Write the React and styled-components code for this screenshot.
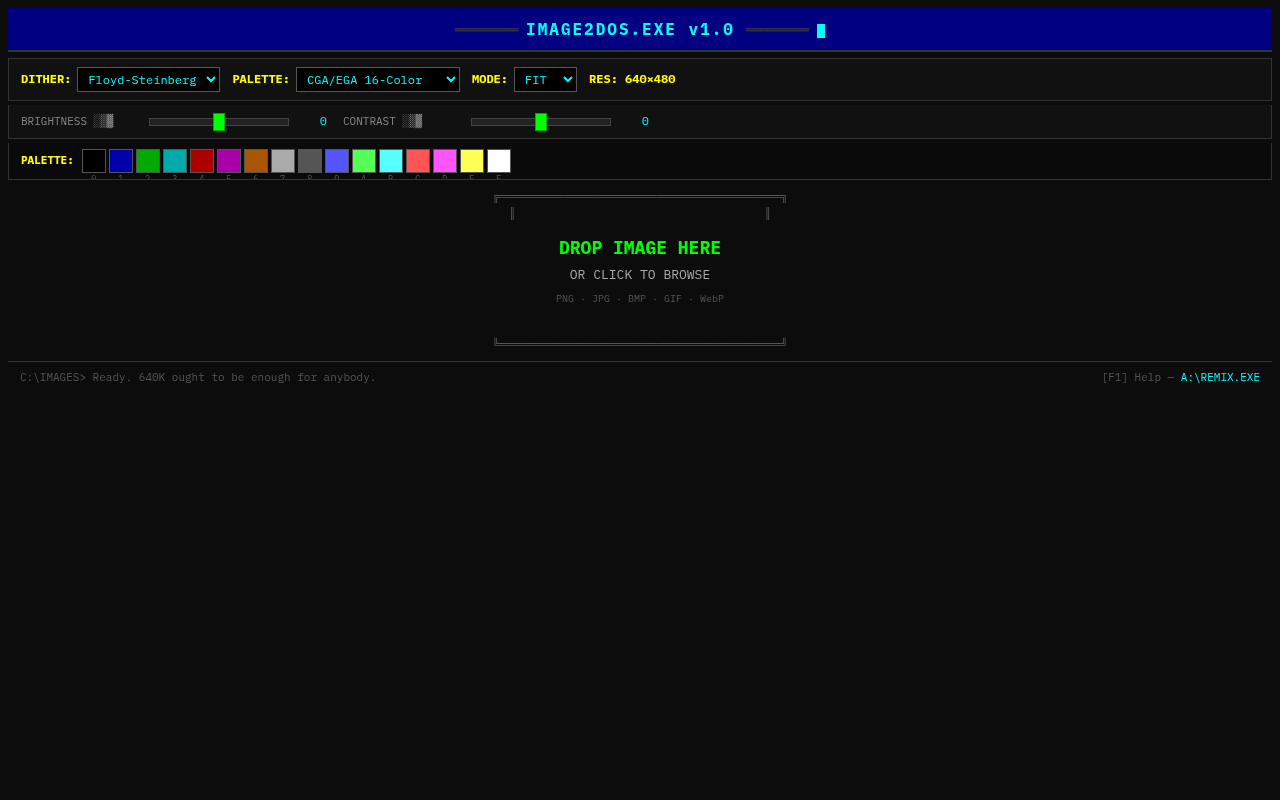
import React, { useState } from 'react';
import styled, { createGlobalStyle } from 'styled-components';

const GlobalStyle = createGlobalStyle`
  *,
  *::before {
    box-sizing: border-box;
  }

  body {
    margin: 0;
    background: #0c0c0c;
    color: #aaa;
    font-family: 'IBM Plex Mono', 'Liberation Mono', monospace;
    font-size: 12px;
    line-height: 1.6;
  }
`;

const Screen = styled.main`
  padding: 8px;
  will-change: transform;
`;

const Header = styled.header`
  display: flex;
  align-items: center;
  justify-content: center;
  height: 44px;
  margin-bottom: 6px;
  background: #000080;
  border-bottom: 2px solid #333;
`;

const HeaderRule = styled.span`
  width: 63px;
  padding-top: 4px;
  white-space: nowrap;
  color: #444;
  font-family: 'DejaVu Sans Mono', monospace;
  font-size: 12px;
  letter-spacing: -0.22px;
`;

const Title = styled.h1`
  margin: 0 11px 0 8px;
  color: #0ff;
  font-size: 16px;
  font-weight: 700;
  letter-spacing: 2px;
  line-height: 26px;
`;

const Cursor = styled.span`
  width: 8px;
  height: 14px;
  margin: 4px 0 0 8px;
  background: #0ff;
`;

const Panel = styled.section`
  display: flex;
  align-items: center;
  border: 1px solid #333;
  background: #111;
  padding: 0 12px;
`;

const Toolbar = styled(Panel)`
  gap: 12px;
  height: 43px;
  margin-bottom: 4px;
`;

const Adjustments = styled(Panel)`
  gap: 16px;
  height: 34px;
  margin-bottom: 4px;
  border-top: none;
`;

const PaletteBar = styled(Panel)`
  height: 37px;
  align-items: flex-start;
  border-top: none;
  background: #0a0a0a;
  padding-top: 6px;
  overflow: hidden;
`;

const Field = styled.label`
  display: flex;
  align-items: center;
  gap: 6px;
`;

const Label = styled.span`
  padding-bottom: 2px;
  color: #ff0;
  font-size: 12px;
  font-weight: 700;
  white-space: nowrap;
`;

const PaletteLabel = styled(Label)`
  padding: 3px 0 0;
  font-size: 11px;
`;

const SelectBox = styled.select`
  width: ${(props) => props.$width}px;
  height: 25px;
  padding: 3px 6px 5px;
  background: #000;
  color: #0ff;
  border: 1px solid #555;
  border-radius: 0;
  font-family: inherit;
  font-size: 12px;
  outline: none;
`;

const SliderGroup = styled.div`
  display: flex;
  align-items: center;
  gap: 8px;
`;

const SliderLabel = styled.span`
  width: 120px;
  color: #888;
  font-size: 11px;
  white-space: nowrap;
`;

const Shades = styled.span`
  letter-spacing: 0.2px;
`;

const Slider = styled.input`
  appearance: none;
  width: 140px;
  height: 8px;
  margin: 0;
  background: #222;
  border: 1px solid #444;

  &::-webkit-slider-thumb {
    appearance: none;
    width: 12px;
    height: 18px;
    background: #0f0;
    border: 1px solid #0a0;
  }
`;

const SliderValue = styled.span`
  width: 30px;
  padding-bottom: 2px;
  color: #0ff;
  font-size: 12px;
  text-align: right;
`;

const Swatches = styled.div`
  display: flex;
  gap: 3px;
  margin-left: 8px;
`;

const Swatch = styled.div`
  width: 24px;
  color: #555;
  font-size: 9px;
  line-height: 11px;
  text-align: center;

  &::before {
    content: '';
    display: block;
    height: 24px;
    background: ${(props) => props.$color};
    border: 1px solid #555;
  }
`;

const DropZone = styled.div`
  display: flex;
  flex-direction: column;
  align-items: center;
  height: 181px;
  padding-top: 8px;
  cursor: pointer;
`;

const Frame = styled.div`
  height: ${(props) => props.$height || 17.6}px;
  color: #555;
  font-family: 'DejaVu Sans Mono', monospace;
  font-size: 11px;
  letter-spacing: -0.07px;
  line-height: 17.6px;
  white-space: pre;
`;

const DropTitle = styled.div`
  color: #0f0;
  font-size: 18px;
  font-weight: 700;
  line-height: 28px;
  margin-top: 12px;
`;

const DropHint = styled.div`
  color: #aaa;
  font-size: 13px;
  line-height: 21px;
  margin-top: 2px;
`;

const Formats = styled.div`
  color: #555;
  font-size: 10px;
  line-height: 16px;
  margin: 6px 0 29px;
`;

const StatusBar = styled.footer`
  display: flex;
  justify-content: space-between;
  padding: 7px 12px;
  border-top: 1px solid #333;
  color: #555;
  font-size: 11px;
`;

const RemixLink = styled.a`
  color: #0ff;
  text-decoration: none;
`;

const COLORS = [
  '#000000', '#0000aa', '#00aa00', '#00aaaa',
  '#aa0000', '#aa00aa', '#aa5500', '#aaaaaa',
  '#555555', '#5555ff', '#55ff55', '#55ffff',
  '#ff5555', '#ff55ff', '#ffff55', '#ffffff',
];

function App() {
  const [brightness, setBrightness] = useState(0);
  const [contrast, setContrast] = useState(0);

  return (
    <Screen>
      <GlobalStyle />
      <Header>
        <HeaderRule>═════════</HeaderRule>
        <Title>IMAGE2DOS.EXE v1.0</Title>
        <HeaderRule>═════════</HeaderRule>
        <Cursor />
      </Header>

      <Toolbar>
        <Field>
          <Label>DITHER:</Label>
          <SelectBox $width={143}>
            <option>Floyd-Steinberg</option>
          </SelectBox>
        </Field>
        <Field>
          <Label>PALETTE:</Label>
          <SelectBox $width={164}>
            <option>CGA/EGA 16-Color</option>
          </SelectBox>
        </Field>
        <Field>
          <Label>MODE:</Label>
          <SelectBox $width={63}>
            <option>FIT</option>
          </SelectBox>
        </Field>
        <Label>RES: 640×480</Label>
      </Toolbar>

      <Adjustments>
        <SliderGroup>
          <SliderLabel>
            BRIGHTNESS <Shades>░▒▓</Shades>
          </SliderLabel>
          <Slider
            type="range"
            min="-100"
            max="100"
            value={brightness}
            onChange={(e) => setBrightness(Number(e.target.value))}
          />
          <SliderValue>{brightness}</SliderValue>
        </SliderGroup>
        <SliderGroup>
          <SliderLabel>
            CONTRAST <Shades>░▒▓</Shades>
          </SliderLabel>
          <Slider
            type="range"
            min="-100"
            max="100"
            value={contrast}
            onChange={(e) => setContrast(Number(e.target.value))}
          />
          <SliderValue>{contrast}</SliderValue>
        </SliderGroup>
      </Adjustments>

      <PaletteBar>
        <PaletteLabel>PALETTE:</PaletteLabel>
        <Swatches>
          {COLORS.map((color, index) => (
            <Swatch key={color} $color={color}>
              {index.toString(16).toUpperCase()}
            </Swatch>
          ))}
        </Swatches>
      </PaletteBar>

      <DropZone>
        <Frame $height={16.6}>{`╔${'═'.repeat(43)}╗`}</Frame>
        <Frame>{`║${' '.repeat(38)}║`}</Frame>
        <DropTitle>DROP IMAGE HERE</DropTitle>
        <DropHint>OR CLICK TO BROWSE</DropHint>
        <Formats>PNG · JPG · BMP · GIF · WebP</Formats>
        <Frame>{`╚${'═'.repeat(43)}╝`}</Frame>
      </DropZone>

      <StatusBar>
        <span>C:\IMAGES&gt; Ready. 640K ought to be enough for anybody.</span>
        <span>
          [F1] Help — <RemixLink>A:\REMIX.EXE</RemixLink>
        </span>
      </StatusBar>
    </Screen>
  );
}

export default App;
